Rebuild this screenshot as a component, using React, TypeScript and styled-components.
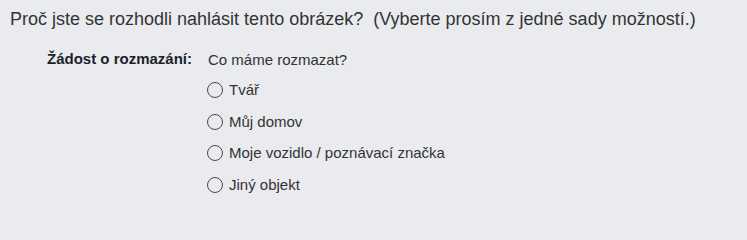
import React from "react";
import styled, { createGlobalStyle } from "styled-components";

const Global = createGlobalStyle`
  html, body { margin: 0; padding: 0; background: #e9ebee; }
  body { font-family: "Liberation Sans", Arial, sans-serif; color: #1d2129; }
`;

const Page = styled.div`
  padding: 8px 10px 0 10px;
`;

const Title = styled.div`
  font-size: 18px;
  line-height: 22px;
  color: #333;
  white-space: pre;
`;

const Row = styled.div`
  display: grid;
  grid-template-columns: 182px auto;
  column-gap: 16px;
  margin-top: 21px;
`;

const Label = styled.div`
  font-weight: bold;
  font-size: 15px;
  text-align: right;
  line-height: 18px;
  color: #1d2129;
  margin-top: -1px;
`;

const Options = styled.div`
  display: flex;
  flex-direction: column;
`;

const Question = styled.div`
  font-size: 15px;
  line-height: 18px;
  color: #333;
`;

const OptionList = styled.div`
  display: flex;
  flex-direction: column;
  gap: 13.5px;
  padding-top: 12px;
  margin-left: -1px;
`;

const Option = styled.label`
  display: flex;
  align-items: center;
  gap: 6px;
  height: 18px;
  font-size: 15px;
  line-height: 18px;
  color: #333;
`;

const Radio = styled.span`
  width: 14px;
  height: 14px;
  border: 1px solid #4a4a4a;
  border-radius: 50%;
  flex: none;
  box-sizing: content-box;
`;

const options = ["Tvář", "Můj domov", "Moje vozidlo / poznávací značka", "Jiný objekt"];

export default function App() {
  return (
    <>
      <Global />
      <Page>
        <Title>Proč jste se rozhodli nahlásit tento obrázek?  (Vyberte prosím z jedné sady možností.)</Title>
        <Row>
          <Label>Žádost o rozmazání:</Label>
          <Options>
            <Question>Co máme rozmazat?</Question>
            <OptionList>
              {options.map((o) => (
                <Option key={o}>
                  <Radio />
                  {o}
                </Option>
              ))}
            </OptionList>
          </Options>
        </Row>
      </Page>
    </>
  );
}
